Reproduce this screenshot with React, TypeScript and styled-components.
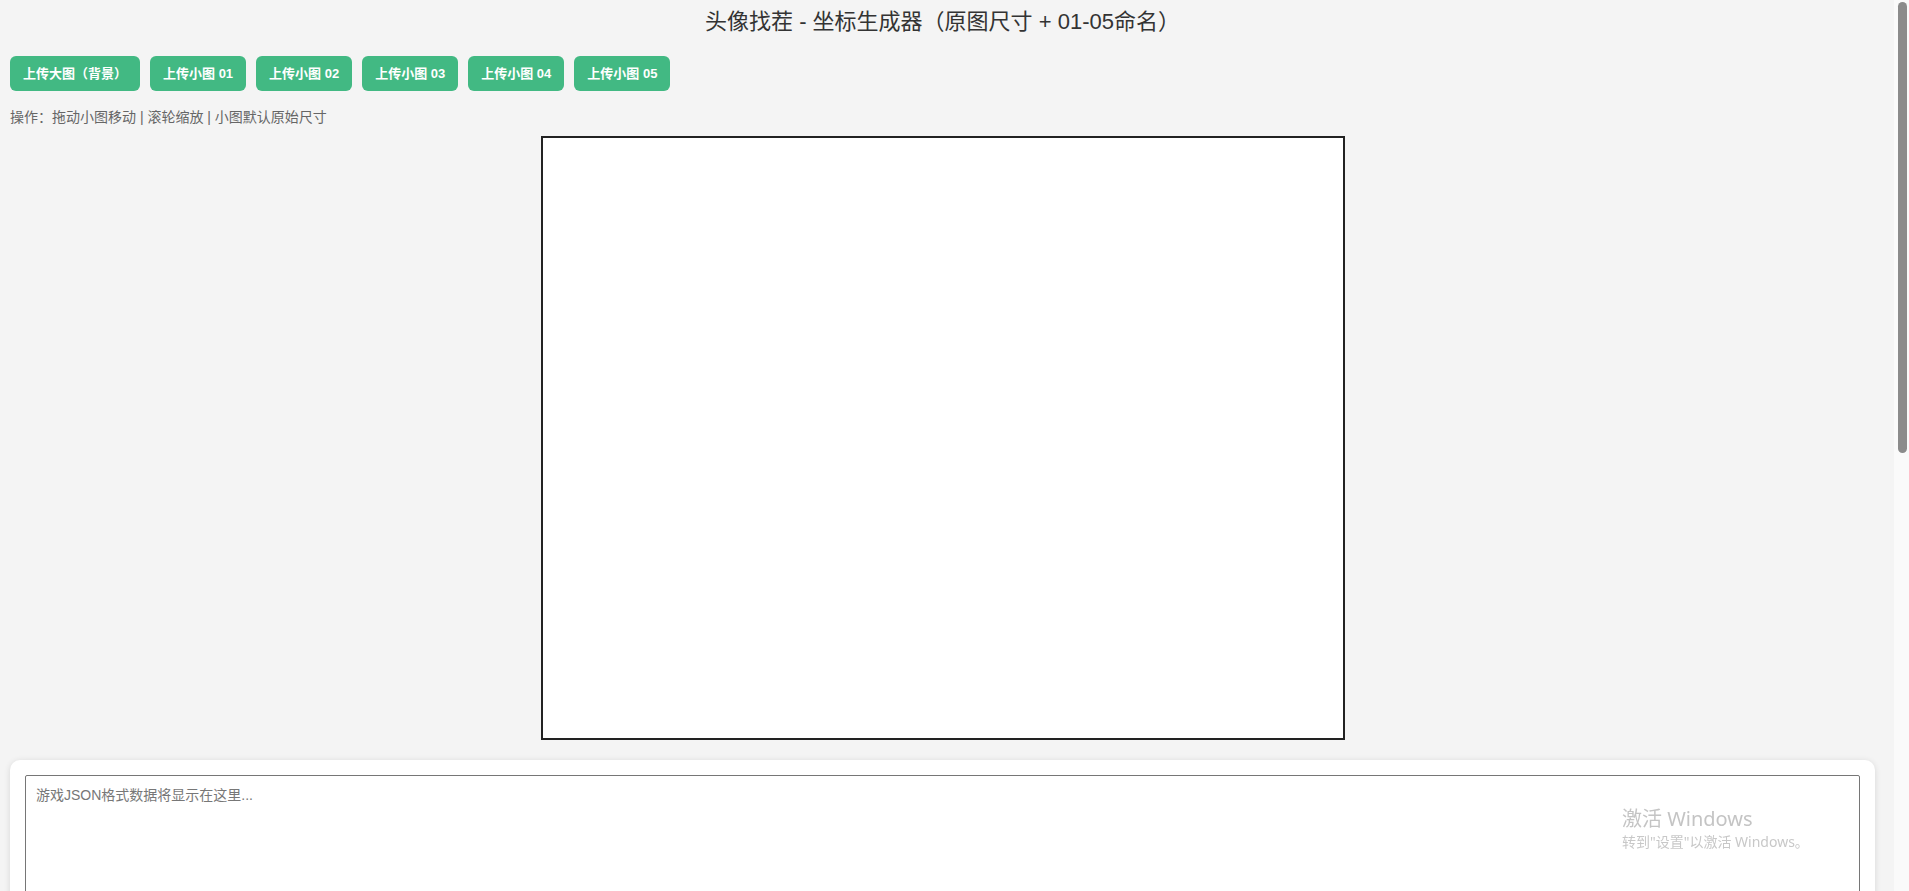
import React from "react";
import styled, { createGlobalStyle } from "styled-components";

const GlobalStyle = createGlobalStyle`
  html, body {
    margin: 0;
    padding: 0;
    background: #f4f4f4;
  }
  body {
    font-family: "Liberation Sans", "Noto Sans CJK SC", sans-serif;
    color: #333;
  }
  html {
    scrollbar-width: none;
  }
  ::-webkit-scrollbar {
    display: none;
  }
`;

const Page = styled.div`
  padding: 0 34px 10px 10px;
  box-sizing: border-box;
`;

const Title = styled.h1`
  margin: 0;
  height: 44px;
  line-height: 44px;
  font-size: 22px;
  font-weight: normal;
  text-align: center;
  color: #333;
`;

const Toolbar = styled.div`
  display: flex;
  gap: 10px;
  margin-top: 12px;
`;

const UploadButton = styled.button`
  height: 35px;
  padding: 0 13px;
  border: none;
  border-radius: 6px;
  background: #42b983;
  color: #fff;
  font-family: "Liberation Sans", "Noto Sans CJK SC", sans-serif;
  font-size: 13px;
  font-weight: bold;
  line-height: 35px;
  cursor: pointer;
`;

const Hint = styled.p`
  margin: 16px 0 0;
  font-size: 14px;
  line-height: 20px;
  color: #666;
`;

const Canvas = styled.canvas`
  display: block;
  margin: 9px auto 0;
  width: 800px;
  height: 600px;
  background: #fff;
  border: 2px solid #222;
`;

const Card = styled.div`
  margin-top: 20px;
  padding: 15px;
  background: #fff;
  border-radius: 10px;
  box-shadow: 0 1px 6px rgba(0, 0, 0, 0.12);
`;

const Output = styled.textarea`
  display: block;
  width: 100%;
  height: 950px;
  box-sizing: border-box;
  padding: 10px;
  border: 1px solid #767676;
  border-radius: 2px;
  font-family: "Liberation Sans", "Noto Sans CJK SC", sans-serif;
  font-size: 14px;
  line-height: 18px;
  color: #333;
  resize: vertical;
  &::placeholder {
    color: #777;
  }
`;

const ScrollTrack = styled.div`
  position: fixed;
  top: 0;
  right: 0;
  width: 15px;
  height: 100vh;
  box-sizing: border-box;
  padding: 2px 2px 0 4px;
  background: #fafafa;
`;

const ScrollThumb = styled.div`
  height: 451px;
  border-radius: 5px;
  background: #8b8b8b;
`;

const Watermark = styled.div`
  position: fixed;
  left: 1622px;
  top: 806px;
  pointer-events: none;
  font-family: "Noto Sans", "Noto Sans CJK SC", sans-serif;
  color: #c4c4c4;
`;

const WatermarkTitle = styled.div`
  font-size: 20px;
  line-height: 26px;
`;

const WatermarkSub = styled.div`
  font-size: 14px;
  line-height: 20px;
  color: #c8c8c8;
`;

const labels = [
  "上传大图（背景）",
  "上传小图 01",
  "上传小图 02",
  "上传小图 03",
  "上传小图 04",
  "上传小图 05",
];

export default function App() {
  return (
    <>
      <GlobalStyle />
      <Page>
        <Title>头像找茬 - 坐标生成器（原图尺寸 + 01-05命名）</Title>
        <Toolbar>
          {labels.map((l) => (
            <UploadButton key={l}>{l}</UploadButton>
          ))}
        </Toolbar>
        <Hint>操作：拖动小图移动 | 滚轮缩放 | 小图默认原始尺寸</Hint>
        <Canvas width={800} height={600} />
        <Card>
          <Output placeholder="游戏JSON格式数据将显示在这里..." readOnly />
        </Card>
      </Page>
      <ScrollTrack>
        <ScrollThumb />
      </ScrollTrack>
      <Watermark>
        <WatermarkTitle>激活 Windows</WatermarkTitle>
        <WatermarkSub>转到"设置"以激活 Windows。</WatermarkSub>
      </Watermark>
    </>
  );
}
